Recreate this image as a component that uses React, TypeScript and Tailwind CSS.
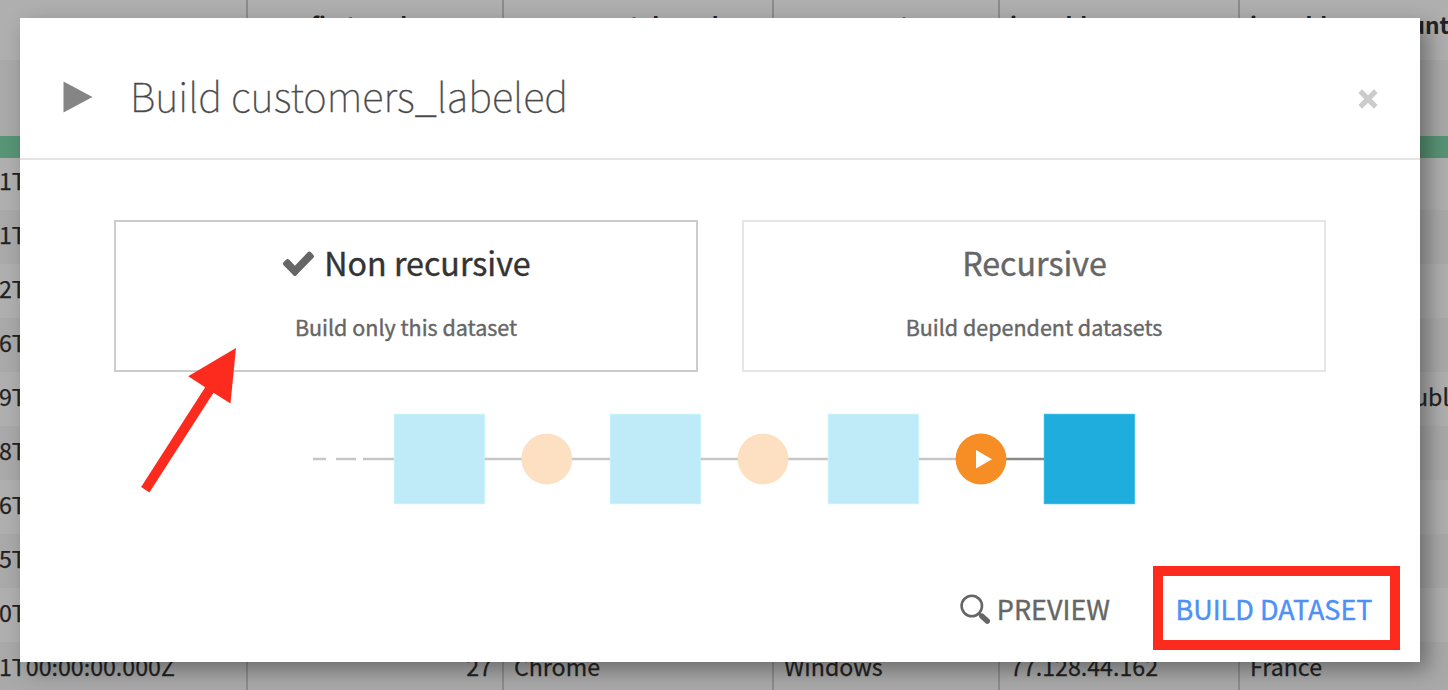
import React from "react";

const FONT = "font-['Noto_Sans_CJK_SC',sans-serif]";

const columns = [
  { name: "", width: "w-[248px]" },
  { name: "age_first_order", width: "w-[256px]" },
  { name: "user_agent_brand", width: "w-[270px]" },
  { name: "user_agent_os", width: "w-[226px]" },
  { name: "ip_address", width: "w-[240px]" },
  { name: "ip_address_country", width: "w-[300px]" },
];

const rows = [
  ["1T00:00:00.000Z", "", "", "", "", ""],
  ["1T00:00:00.000Z", "", "", "", "", ""],
  ["2T00:00:00.000Z", "", "", "", "", ""],
  ["6T00:00:00.000Z", "", "", "", "", ""],
  ["9T00:00:00.000Z", "", "", "", "", "Dominican Republic"],
  ["8T00:00:00.000Z", "", "", "", "", ""],
  ["6T00:00:00.000Z", "", "", "", "", ""],
  ["5T00:00:00.000Z", "", "", "", "", ""],
  ["0T00:00:00.000Z", "", "", "", "", ""],
  ["1T00:00:00.000Z", "27", "Chrome", "Windows", "77.128.44.162", "France"],
];

function DataTable() {
  return (
    <div className="flex h-full w-[1540px] flex-col text-[#222]">
      <div className="flex h-[60px] shrink-0 bg-[#afafaf] text-[22.7px] font-bold leading-[49px]">
        {columns.map((c, i) => (
          <div key={i} className={`${c.width} shrink-0 border-r-2 border-[#8c8c8c] pl-[10px]`}>
            {c.name}
          </div>
        ))}
      </div>
      <div className="h-[76px] shrink-0 bg-[#a9a9a9]" />
      <div className="h-[22px] shrink-0 bg-[#589476]" />
      {rows.map((r, i) => (
        <div
          key={i}
          className={`flex shrink-0 text-[23.2px] [-webkit-text-stroke:0.25px_#222] ${i === 0 ? "h-[52px] leading-[44px]" : "h-[54px] leading-[48px]"} ${i % 2 ? "bg-[#a9a9a9]" : "bg-[#afafaf]"}`}
        >
          {r.map((cell, j) => (
            <div
              key={j}
              className={`${columns[j].width} shrink-0 border-r-2 border-[#8c8c8c] ${j === 0 ? "-indent-px" : j === 1 ? "pr-[10px] text-right" : "pl-[10px]"}`}
            >
              {cell}
            </div>
          ))}
        </div>
      ))}
    </div>
  );
}

function CheckIcon() {
  return (
    <svg className="mt-[2px] h-[25px] w-[31px]" viewBox="121 309 1550 1213" preserveAspectRatio="none" fill="#666">
      <path d="M1671 566q0 40-28 68l-724 724-136 136q-28 28-68 28t-68-28l-136-136-362-362q-28-28-28-68t28-68l136-136q28-28 68-28t68 28l294 295 656-657q28-28 68-28t68 28l136 136q28 28 28 68z" />
    </svg>
  );
}

function Flow() {
  return (
    <svg width="824" height="94" viewBox="312 412 824 94">
      <path d="M313 459h13M336 459h20M363 459h31M484 459h126M700 459h128M918 459h50" stroke="#c6c6c6" strokeWidth="2.4" />
      <path d="M1000 459h45" stroke="#8a8a8a" strokeWidth="2.4" />
      <g fill="#bfeaf8" stroke="#c3f1fb" strokeWidth="1">
        <rect x="394.3" y="414.3" width="90" height="89.4" />
        <rect x="610.3" y="414.3" width="90" height="89.4" />
        <rect x="828.3" y="414.3" width="90" height="89.4" />
      </g>
      <rect x="1044.3" y="414.3" width="90" height="89.4" fill="#1eaddc" stroke="#25b6e2" />
      <circle cx="546.8" cy="459" r="25.4" fill="#fde0c2" />
      <circle cx="763" cy="459" r="25.4" fill="#fde0c2" />
      <circle cx="981" cy="459" r="25.4" fill="#f78d25" />
      <path d="M976 450v18.5l16-9.3z" fill="#fff" />
    </svg>
  );
}

export default function App() {
  return (
    <div className={`relative h-[690px] w-[1448px] overflow-hidden ${FONT}`}>
      <DataTable />
      <div className="absolute left-[20px] top-[18px] flex h-[644px] w-[1400px] flex-col bg-white shadow-[8px_8px_20px_rgba(0,0,0,0.36)]">
        <header className="flex h-[142px] shrink-0 items-center border-b-2 border-[#e4e4e4] pl-[43px] pr-[42px]">
          <svg className="mt-[17px]" width="30" height="32" viewBox="0 0 30 32">
            <path d="M0.5 0.5v31L29.5 16z" fill="#858585" />
          </svg>
          <h1 className="ml-[37px] mt-[14px] text-[40px] font-thin leading-[60px] text-[#444] [-webkit-text-stroke:0.4px_#555]">
            Build customers_labeled
          </h1>
          <svg className="ml-auto mt-[22px]" width="20" height="20" viewBox="0 0 20 20">
            <path d="M2.2 2.2l15.6 15.6M17.8 2.2L2.2 17.8" stroke="#ccc" strokeWidth="5.2" />
          </svg>
        </header>
        <div className="flex gap-[44px] px-[94px] pt-[60px]">
          <button className="flex h-[152px] w-[584px] flex-col items-center border-2 border-[#ccc] pt-[15px]">
            <span className="flex items-center gap-[10px] pl-[2px] text-[32.2px] leading-[50px] text-[#333] [-webkit-text-stroke:0.4px_#333]">
              <CheckIcon />
              Non recursive
            </span>
            <span className="mt-[20px] text-[21.5px] leading-[40px] text-[#666] [-webkit-text-stroke:0.4px_#666]">Build only this dataset</span>
          </button>
          <button className="flex h-[152px] w-[584px] flex-col items-center border-2 border-[#e6e6e6] pt-[15px]">
            <span className="pl-px text-[32.2px] leading-[50px] text-[#666] [-webkit-text-stroke:0.4px_#666]">Recursive</span>
            <span className="mt-[20px] text-[21.5px] leading-[40px] text-[#666] [-webkit-text-stroke:0.4px_#666]">Build dependent datasets</span>
          </button>
        </div>
        <div className="mt-[40px] pl-[292px]">
          <Flow />
        </div>
        <footer className="mt-auto flex items-center justify-end pb-[12px] pr-[20px]">
          <button className="flex items-center gap-[6px] text-[27px] leading-[40px] text-[#666] [-webkit-text-stroke:0.4px_#666]">
            <svg className="mt-[2px]" width="31" height="31" viewBox="0 0 31 31" fill="none" stroke="#666">
              <circle cx="11.8" cy="12" r="10.2" strokeWidth="2.6" />
              <path d="M19 19.5l3 3" strokeWidth="2.5" />
              <path d="M22 22.2l5.2 4.8" strokeWidth="5.6" strokeLinecap="round" />
            </svg>
            <span className="pt-[2px]">PREVIEW</span>
          </button>
          <button className="ml-[43px] flex h-[84px] w-[247px] items-center justify-center border-[10px] border-[#fd2b1d] pr-[5px] pt-[2px] text-[27px] text-[#4d90f7] [-webkit-text-stroke:0.4px_#4d90f7]">
            BUILD DATASET
          </button>
        </footer>
      </div>
      <svg className="absolute left-[140px] top-[346px]" width="98" height="150" viewBox="140 346 98 150">
        <path d="M236 348L188.2 376.3 205.2 387.3 141.1 487 149.4 492.5 213.5 392.7 230.5 403.5z" fill="#fd2b1d" />
      </svg>
    </div>
  );
}
